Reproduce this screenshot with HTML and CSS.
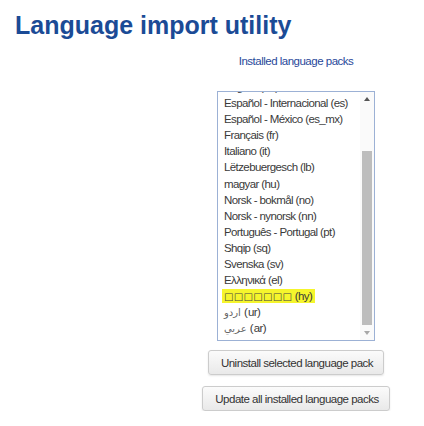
FILE: index.html
```html
<!DOCTYPE html>
<html lang="en">
<head>
<meta charset="utf-8">
<title>Language import utility</title>
<link rel="stylesheet" href="styles.css">
</head>
<body>
<h1 class="page-title">Language import utility</h1>
<div class="columns">
  <div class="available"></div>
  <div class="installed">
    <h3 class="installed-title">Installed language packs</h3>
    <div class="listbox">
      <div class="options">
        <div class="option">English (en)</div>
        <div class="option">Español - Internacional (es)</div>
        <div class="option">Español - México (es_mx)</div>
        <div class="option">Français (fr)</div>
        <div class="option">Italiano (it)</div>
        <div class="option">Lëtzebuergesch (lb)</div>
        <div class="option">magyar (hu)</div>
        <div class="option">Norsk - bokmål (no)</div>
        <div class="option">Norsk - nynorsk (nn)</div>
        <div class="option">Português - Portugal (pt)</div>
        <div class="option">Shqip (sq)</div>
        <div class="option">Svenska (sv)</div>
        <div class="option">Ελληνικά (el)</div>
        <div class="option"><span class="marked"><span class="tofu">□□□□□□□</span> (hy)</span></div>
        <div class="option"><span class="arabic">اردو</span> (ur)</div>
        <div class="option"><span class="arabic">عربي</span> (ar)</div>
      </div>
      <div class="scrollbar">
        <div class="arrow arrow-up"></div>
        <div class="track"><div class="thumb"></div></div>
        <div class="arrow arrow-down"></div>
      </div>
    </div>
    <button class="btn btn-uninstall" type="button">Uninstall selected language pack</button>
    <button class="btn btn-update" type="button">Update all installed language packs</button>
  </div>
</div>
</body>
</html>
```

FILE: styles.css
```css
html, body {
  margin: 0;
  padding: 0;
  background: #ffffff;
}

body {
  font-family: "Liberation Sans", Arial, sans-serif;
  color: #333333;
}

.page-title {
  margin: 10px 0 14px 15px;
  font-weight: 700;
  font-size: 25px;
  line-height: 30px;
  color: #1b4b96;
}

.columns {
  display: flex;
}

.available {
  width: 196px;
  flex: none;
}

.installed {
  width: 200px;
  flex: none;
  display: flex;
  flex-direction: column;
  align-items: center;
}

.installed-title {
  margin: 0 0 22px;
  font-weight: 400;
  font-size: 11.5px;
  line-height: 15px;
  letter-spacing: -0.5px;
  color: #28489a;
}

.listbox {
  box-sizing: border-box;
  width: 158px;
  height: 250px;
  border: 1px solid #9cb1d5;
  background: #ffffff;
  display: flex;
  overflow: hidden;
}

.options {
  flex: 1;
  min-width: 0;
  overflow: hidden;
}

.option {
  height: 16.1px;
  line-height: 16.1px;
  padding-left: 6px;
  font-size: 11.5px;
  letter-spacing: -0.6px;
  color: #3a3a3a;
  white-space: nowrap;
}

.option:first-child {
  margin-top: -13px;
}

.marked {
  background: #f5f52c;
  padding: 1px 3px 1px 2px;
  margin-left: -2px;
}

.tofu {
  font-family: "DejaVu Sans", sans-serif;
  font-size: 10px;
  letter-spacing: 0.3px;
  color: #444444;
}

.arabic {
  font-family: "DejaVu Sans", "Noto Sans", sans-serif;
  font-size: 10px;
  letter-spacing: 0;
  color: #666666;
}

.scrollbar {
  width: 14px;
  flex: none;
  display: flex;
  flex-direction: column;
  background: #fafafa;
}

.arrow {
  height: 14px;
  flex: none;
  display: flex;
  align-items: center;
  justify-content: center;
}

.arrow-up::before {
  content: "";
  border-left: 3px solid transparent;
  border-right: 3px solid transparent;
  border-bottom: 4px solid #555555;
}

.arrow-down::before {
  content: "";
  border-left: 3px solid transparent;
  border-right: 3px solid transparent;
  border-top: 4px solid #a8a8a8;
}

.track {
  flex: 1;
  display: flex;
  flex-direction: column;
  align-items: center;
}

.thumb {
  margin-top: 45px;
  width: 10px;
  height: 174px;
  background: #bdbdbd;
}

.btn {
  box-sizing: border-box;
  height: 25px;
  padding: 0 10px 0 12px;
  border: 1px solid #cccccc;
  border-radius: 3px;
  background: linear-gradient(#fbfbfb, #e9e9e9);
  box-shadow: 0 1px 2px rgba(0, 0, 0, 0.1);
  font-family: "Liberation Sans", Arial, sans-serif;
  font-size: 11.5px;
  letter-spacing: -0.5px;
  color: #333333;
  white-space: nowrap;
}

.btn-uninstall {
  margin-top: 9px;
}

.btn-update {
  margin-top: 11px;
}
```
